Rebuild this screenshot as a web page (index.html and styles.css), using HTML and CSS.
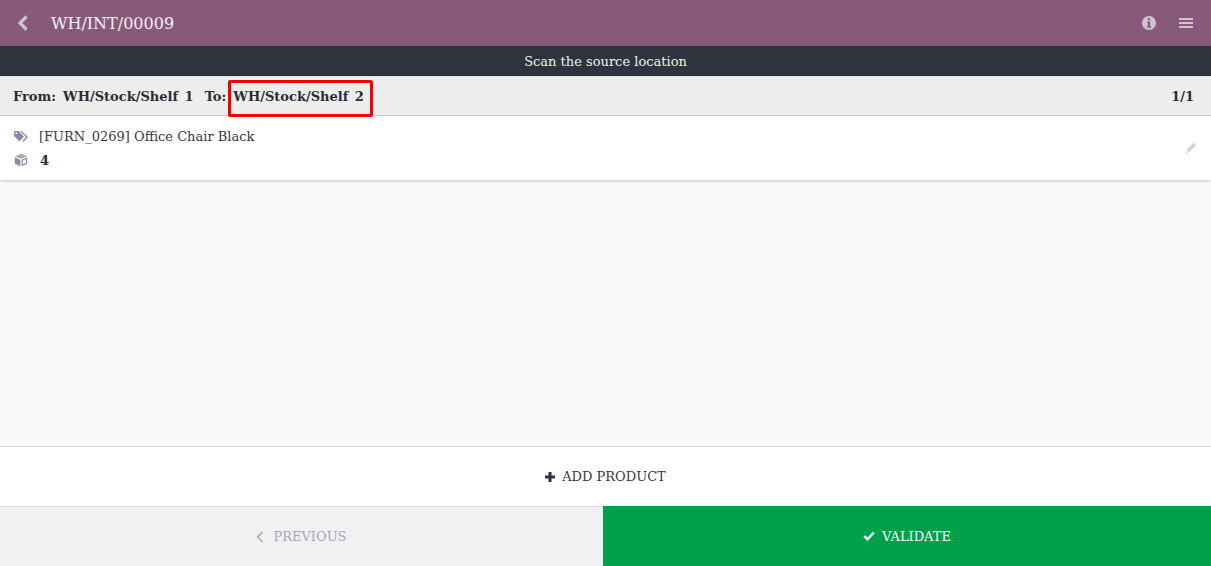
FILE: index.html

```html
<!DOCTYPE html>
<html lang="en">
<head>
  <meta charset="UTF-8">
  <meta name="viewport" content="width=device-width, initial-scale=1.0">
  <title>WH/INT/00009</title>
  <link rel="stylesheet" href="styles.css">
</head>
<body>
  <div class="app">
    <header class="navbar">
      <svg class="icon back" viewBox="0 0 12 18" width="12" height="18"><path d="M9.5 2.5 3 9l6.5 6.500" fill="none" stroke="currentColor" stroke-width="3.2"/></svg>
      <span class="navbar-title">WH/INT/00009</span>
      <svg class="icon info" viewBox="0 0 14 14" width="14" height="14"><path fill-rule="evenodd" d="M7 0a7 7 0 1 1 0 14A7 7 0 0 1 7 0ZM5.800 2.300v2h2.400v-2ZM5 5.500v1.300h.9v3.300H5v1.400h4v-1.400h-.9V5.500Z" fill="currentColor"/></svg>
      <svg class="icon menu" viewBox="0 0 14 12" width="14" height="12"><path d="M0 1h14v2H0zM0 5h14v2H0zM0 9h14v2H0z" fill="currentColor"/></svg>
    </header>

    <div class="message">Scan the source location</div>

    <div class="locations">
      <span class="label">From:</span>
      <span class="place">WH/Stock/Shelf 1</span>
      <span class="label label-to">To:</span>
      <span class="place place-marked">WH/Stock/Shelf 2</span>
      <span class="counter">1/1</span>
    </div>

    <main class="lines">
      <div class="line">
        <div class="line-info">
          <div class="line-row">
            <svg class="line-icon" viewBox="0 0 14 11" width="14" height="11"><path d="M0 0h4.500L10 5.500 5.500 10.500 0 5Z" fill="#8f8aa3"/><path d="M6 0h1.500L14 6l-4.500 5-1-1 3.500-4Z" fill="#8f8aa3"/><circle cx="2.200" cy="2.200" r=".9" fill="#fff"/></svg>
            <span class="product">[FURN_0269] Office Chair Black</span>
          </div>
          <div class="line-row">
            <svg class="line-icon" viewBox="0 0 14 14" width="14" height="14"><path d="M7 .8 13 3.300 7 5.800 1 3.300Z" fill="#a9a6b5"/><path d="M.8 4.300 6.400 6.700v6.500L.8 10.700Z" fill="#8f8aa3"/><path d="M7.600 6.700 13.200 4.300v6.400l-5.600 2.500Zm1.200.8v3.800l3.200-1.400V6.100Z" fill="#8f8aa3"/></svg>
            <span class="qty">4</span>
          </div>
        </div>
        <svg class="edit" viewBox="0 0 12 12" width="12" height="12"><path d="M8.500.8 11.200 3.500 4.200 10.500 1.500 7.800Z" fill="#d3d3d6"/><path d="M1.100 8.500 3.500 10.900.2 11.800Z" fill="#e0e0e2"/></svg>
      </div>
    </main>

    <div class="add-product">
      <svg class="plus" viewBox="0 0 10 10" width="10" height="10"><path d="M3.500 0h3v3.500H10v3H6.500V10h-3V6.500H0v-3h3.500Z" fill="#2c3345"/></svg>
      ADD PRODUCT
    </div>

    <footer class="actions">
      <div class="action previous">
        <svg viewBox="0 0 8 12" width="8" height="12"><path d="M6.500 1 1.500 6l5 5" fill="none" stroke="#a8a8ad" stroke-width="1.500"/></svg>
        PREVIOUS
      </div>
      <div class="action validate">
        <svg viewBox="0 0 12 10" width="12" height="10"><path d="M1.200 5 4.500 8.200 10.800 1.500" fill="none" stroke="#fff" stroke-width="2.400"/></svg>
        VALIDATE
      </div>
    </footer>
  </div>
</body>
</html>
```

FILE: styles.css

```css
* {
  box-sizing: border-box;
}
html, body {
  margin: 0;
  padding: 0;
  height: 100%;
}
body {
  font-family: "DejaVu Serif", serif;
  font-size: 13px;
  color: #33303a;
  overflow: hidden;
}
.app {
  display: flex;
  flex-direction: column;
  height: 566px;
}

/* Top bar */
.navbar {
  flex: 0 0 46px;
  display: flex;
  align-items: center;
  padding: 0 18px 0 17px;
  background: #875a7b;
  color: #fff;
}
.navbar-title {
  margin-left: 22px;
  font-size: 16px;
  color: #f6f0f4;
}
.icon {
  color: #cfc3cc;
}
.info {
  margin-left: auto;
}
.menu {
  margin-left: 23px;
}

.message {
  flex: 0 0 30px;
  display: flex;
  align-items: center;
  justify-content: center;
  background: #2f333d;
  color: #f3f1ea;
  font-size: 13px;
}

/* From / To */
.locations {
  flex: 0 0 40px;
  display: flex;
  align-items: center;
  padding: 0 13px;
  background: #eceeee;
  border-top: 1px solid #dfe1e1;
  border-bottom: 1px solid #d3d5d5;
  font-size: 13px;
  font-weight: bold;
  color: #2c2c36;
  white-space: pre;
  word-spacing: 2px;
}
.place {
  margin-left: 7px;
}
.label-to {
  margin-left: 11px;
}
.place-marked {
  position: relative;
}
.place-marked::after {
  content: "";
  position: absolute;
  top: -9px;
  bottom: -13px;
  left: -5px;
  right: -9px;
  border: 3px solid #f50000;
  border-radius: 2px;
}
.counter {
  margin-left: auto;
  padding-right: 4px;
}

/* Lines */
.lines {
  flex: 1;
  background: #f8f9fb;
}
.line {
  height: 64px;
  display: flex;
  align-items: center;
  justify-content: space-between;
  padding: 0 14px;
  background: #fff;
  box-shadow: 0 1px 3px rgba(0, 0, 0, 0.2);
}
.line-info {
  display: flex;
  flex-direction: column;
  gap: 7px;
}
.line-row {
  display: flex;
  align-items: center;
  height: 17px;
}
.line-icon {
  flex: 0 0 14px;
}
.product {
  margin-left: 11px;
  color: #3b3640;
}
.qty {
  margin-left: 12px;
  font-weight: bold;
  color: #2c2c36;
}
.edit {
  margin-right: 0;
}

.add-product {
  flex: 0 0 60px;
  display: flex;
  align-items: center;
  justify-content: center;
  gap: 7px;
  background: #fff;
  border-top: 1px solid #d6dae0;
  font-size: 13px;
  color: #3b3640;
}

/* Bottom buttons */
.actions {
  flex: 0 0 60px;
  display: flex;
}
.action {
  display: flex;
  align-items: center;
  justify-content: center;
  gap: 9px;
  font-size: 13px;
}
.previous {
  flex: 0 0 603px;
  background: #f0f1f3;
  border-top: 1px solid #dcdee2;
  color: #a8a6ac;
}
.validate {
  flex: 1;
  background: #00a04a;
  color: #fff;
  gap: 7px;
}
```
